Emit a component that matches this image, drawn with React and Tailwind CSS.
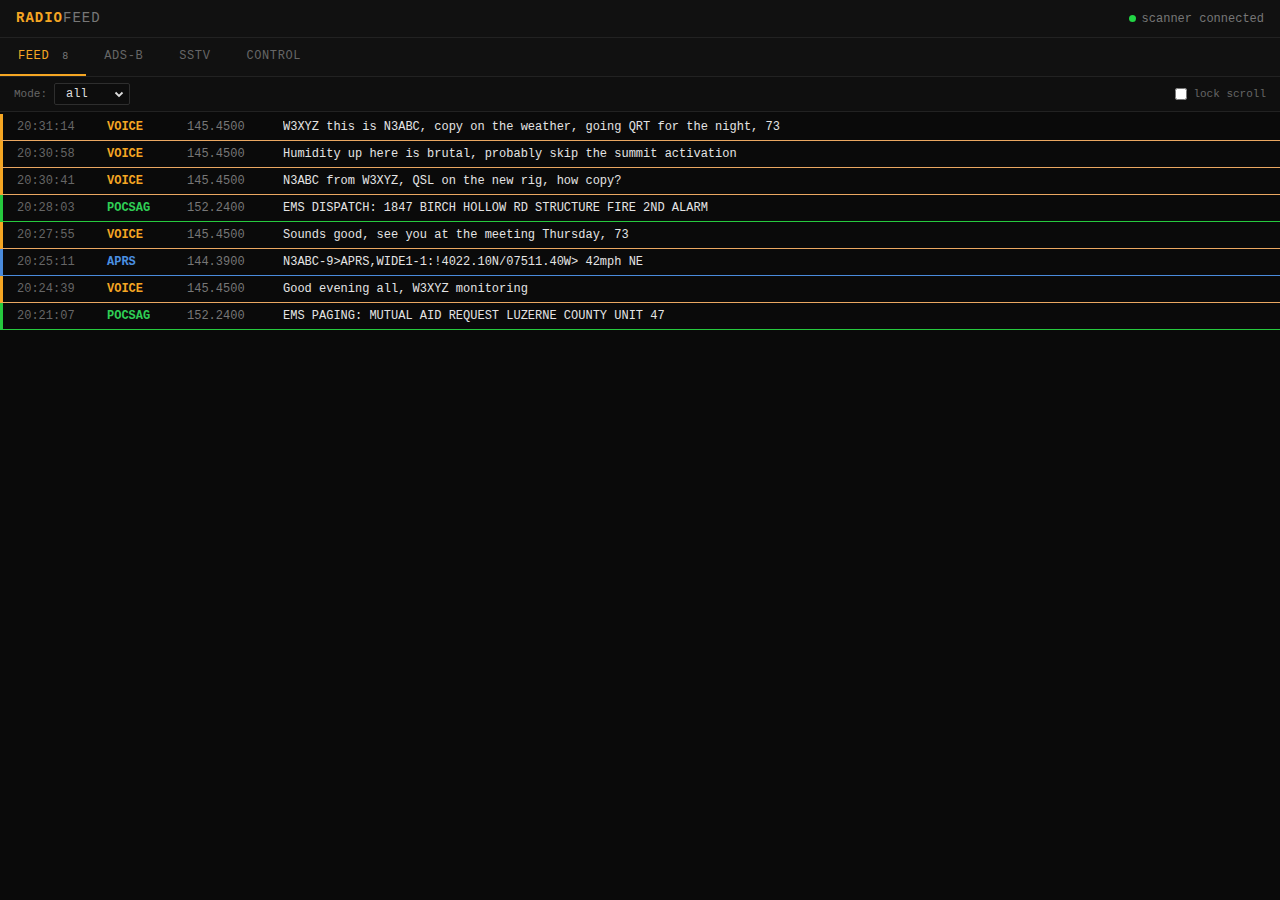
import React, { useState } from "react";

const MODES = {
  VOICE: { text: "text-[#f5a623]", border: "border-[#eba862] border-l-[#f5a623]" },
  POCSAG: { text: "text-[#2fcf55]", border: "border-[#26c93e]" },
  APRS: { text: "text-[#4a90e2]", border: "border-[#4a8bdc]" },
};

const ROWS = [
  { t: "20:31:14", mode: "VOICE", freq: "145.4500", msg: "W3XYZ this is N3ABC, copy on the weather, going QRT for the night, 73" },
  { t: "20:30:58", mode: "VOICE", freq: "145.4500", msg: "Humidity up here is brutal, probably skip the summit activation" },
  { t: "20:30:41", mode: "VOICE", freq: "145.4500", msg: "N3ABC from W3XYZ, QSL on the new rig, how copy?" },
  { t: "20:28:03", mode: "POCSAG", freq: "152.2400", msg: "EMS DISPATCH: 1847 BIRCH HOLLOW RD STRUCTURE FIRE 2ND ALARM" },
  { t: "20:27:55", mode: "VOICE", freq: "145.4500", msg: "Sounds good, see you at the meeting Thursday, 73" },
  { t: "20:25:11", mode: "APRS", freq: "144.3900", msg: "N3ABC-9>APRS,WIDE1-1:!4022.10N/07511.40W> 42mph NE" },
  { t: "20:24:39", mode: "VOICE", freq: "145.4500", msg: "Good evening all, W3XYZ monitoring" },
  { t: "20:21:07", mode: "POCSAG", freq: "152.2400", msg: "EMS PAGING: MUTUAL AID REQUEST LUZERNE COUNTY UNIT 47" },
];

const TABS = ["FEED", "ADS-B", "SSTV", "CONTROL"];

export default function App() {
  const [tab, setTab] = useState("FEED");
  const [mode, setMode] = useState("all");
  const [lock, setLock] = useState(false);

  return (
    <div className="min-h-[900px] bg-[#0a0a0a] font-['Liberation_Mono',monospace] text-[#ddd]">
      {/* Header */}
      <div className="h-[38px] px-4 flex items-center justify-between bg-[#111] border-b border-[#222]">
        <div className="text-[14px] tracking-[1px]">
          <span className="font-bold text-[#f5a623]">RADIO</span>
          <span className="text-[#777]">FEED</span>
        </div>
        <div className="flex items-center gap-[6px] text-[12px] text-[#777]">
          <span className="w-[7px] h-[7px] rounded-full bg-[#22d545]" />
          scanner connected
        </div>
      </div>

      {/* Tabs */}
      <div className="h-[39px] flex bg-[#111] border-b border-[#222]">
        {TABS.map((t) => {
          const active = tab === t;
          return (
            <button
              key={t}
              onClick={() => setTab(t)}
              className={
                "h-full px-[18px] flex items-center gap-[13px] text-[12px] tracking-[0.6px] border-b-2 " +
                (active ? "text-[#f5a623] border-[#f5a623]" : "text-[#666] border-transparent")
              }
            >
              {t}
              {t === "FEED" && <span className="text-[10px] text-[#777] tracking-normal">{ROWS.length}</span>}
            </button>
          );
        })}
      </div>

      {/* Toolbar */}
      <div className="h-[35px] px-[14px] flex items-center justify-between bg-[#0f0f0f] border-b border-[#222]">
        <div className="flex items-center gap-[7px] text-[11px] text-[#666]">
          Mode:
          <div className="relative">
            <select
              value={mode}
              onChange={(e) => setMode(e.target.value)}
              className="appearance-none w-[76px] h-[22px] pl-[11px] text-[12px] text-[#ddd] bg-[#0d0d0d] border border-[#2e2e2e] rounded-[2px] outline-none"
            >
              <option value="all">all</option>
              <option value="voice">voice</option>
              <option value="pocsag">pocsag</option>
              <option value="aprs">aprs</option>
            </select>
            <svg
              viewBox="0 0 10 10"
              className="absolute right-[6px] top-1/2 -translate-y-1/2 w-[10px] h-[10px] pointer-events-none"
            >
              <path d="M1.5 3.5 L5 7 L8.5 3.5" fill="none" stroke="#ddd" strokeWidth="1.8" />
            </svg>
          </div>
        </div>
        <label className="flex items-center gap-[6px] text-[11px] text-[#666]">
          <input
            type="checkbox"
            checked={lock}
            onChange={(e) => setLock(e.target.checked)}
            className="w-[12px] h-[12px] m-0"
          />
          lock scroll
        </label>
      </div>

      {/* Feed */}
      <div className="pt-[2px]">
        {ROWS.map((r, i) => {
          const m = MODES[r.mode];
          return (
            <div
              key={i}
              className={"h-[27px] flex items-center pl-[14px] text-[12px] border-0 border-l-[3px] border-b " + m.border}
            >
              <div className="w-[90px] text-[#666]">{r.t}</div>
              <div className={"w-[80px] font-bold " + m.text}>{r.mode}</div>
              <div className="w-[96px] text-[#777]">{r.freq}</div>
              <div className="flex-1 text-[#e4e4e4] truncate">{r.msg}</div>
            </div>
          );
        })}
      </div>
    </div>
  );
}
